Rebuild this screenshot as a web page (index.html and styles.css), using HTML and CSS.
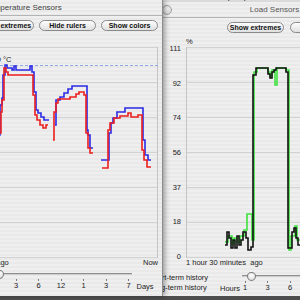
FILE: index.html
```html
<!DOCTYPE html>
<html>
<head>
<meta charset="utf-8">
<title>Sensors</title>
<link rel="stylesheet" href="styles.css">
</head>
<body>
<div class="desktop">
  <div class="bgwin"><span>sensors-report.pdf &nbsp;40% loaded</span><span>Page 3</span></div>

  <section class="win win--load">
    <header class="titlebar">
      <div class="lights"><i></i><i></i><i></i></div>
      <h1 class="title">Load Sensors</h1>
      <div class="tb-spacer"></div>
    </header>
    <div class="toolbar">
      <button class="pill">Show extremes</button>
      <button class="pill">Hide rulers</button>
      <button class="pill">Show colors</button>
    </div>
    <div class="chart">
      <div class="unit">%</div>
      <div class="axis"><span>111</span><span>92</span><span>74</span><span>56</span><span>37</span><span>18</span><span>0</span></div>
      <svg class="plot" width="222" height="211" viewBox="186 47 222 211">
        <g class="grid">
          <line x1="186" x2="408" y1="47.5" y2="47.5"/>
          <line x1="186" x2="408" y1="82.5" y2="82.5"/>
          <line x1="186" x2="408" y1="117.5" y2="117.5"/>
          <line x1="186" x2="408" y1="152.5" y2="152.5"/>
          <line x1="186" x2="408" y1="187.5" y2="187.5"/>
          <line x1="186" x2="408" y1="222.5" y2="222.5"/>
          <line x1="186" x2="408" y1="257.5" y2="257.5"/>
        </g>
        <line class="frame" x1="186.5" x2="186.5" y1="47" y2="258"/>
        <polyline class="green" points="225,242 228,242 228,236 232,236 232,244 234,244 234,238 237,238 237,242 240,242 240,236 244,236 244,230 247,230 247,214 252,214 252,240 254,240 254,72 257,72 257,68 268,68 268,72 270,72 270,76 272,76 272,70 275,70 275,85 277,85 277,68 286,68 286,70 289,70 289,250 291,250 291,236 295,236 295,226 297,226 297,240 302,240 302,232 306,232 306,244 310,244"/>
        <polyline class="black" points="225,245 227,245 227,232 229,232 229,238 231,238 231,248 233,248 233,240 235,240 235,248 237,248 237,236 239,236 239,245 241,245 241,240 243,240 243,232 246,232 246,238 248,238 248,250 251,250 251,247 253,247 253,75 256,75 256,68 268,68 268,74 270,74 270,78 272,78 272,72 274,72 274,70 276,70 276,68 286,68 286,72 288,72 288,248 292,248 292,232 294,232 294,228 296,228 296,238 298,238 298,245 302,245 302,236 306,236 306,246 310,246"/>
      </svg>
      <div class="xlabels"><span>1 hour 30 minutes&nbsp; ago</span><span>Now</span></div>
    </div>
    <div class="controls">
      <div class="radios">
        <label class="radio"><span class="dot on"></span>Short-term history</label>
        <label class="radio"><span class="dot"></span>Long-term history</label>
      </div>
      <span class="unit-lbl">Hours</span>
      <div class="slider">
        <div class="track"><span class="thumb"></span></div>
        <div class="ticks"><span>1</span><span>3</span><span>6</span><span>12</span><span>1</span><span>3</span><span>7</span></div>
      </div>
      <span class="unit-lbl unit-lbl--after">Days</span>
    </div>
  </section>

  <section class="win win--temp">
    <header class="titlebar">
      <div class="lights"><i></i><i></i><i></i></div>
      <h1 class="title">Temperature Sensors</h1>
      <div class="tb-spacer"></div>
    </header>
    <div class="toolbar">
      <button class="pill">Show extremes</button>
      <button class="pill">Hide rulers</button>
      <button class="pill">Show colors</button>
    </div>
    <div class="chart">
      <div class="unit">°C</div>
      <div class="axis"><span>70</span><span>60</span><span>50</span><span>40</span><span>30</span><span>20</span><span>10</span></div>
      <svg class="plot" width="188" height="211" viewBox="-30 47 188 211">
        <g class="grid">
          <line x1="-30" x2="158" y1="47.5" y2="47.5"/>
          <line x1="-30" x2="158" y1="82.5" y2="82.5"/>
          <line x1="-30" x2="158" y1="117.5" y2="117.5"/>
          <line x1="-30" x2="158" y1="152.5" y2="152.5"/>
          <line x1="-30" x2="158" y1="187.5" y2="187.5"/>
          <line x1="-30" x2="158" y1="222.5" y2="222.5"/>
          <line x1="-30" x2="158" y1="257.5" y2="257.5"/>
        </g>
        <line class="frame" x1="157.5" x2="157.5" y1="47" y2="258"/>
        <line class="ruler" x1="-30" x2="158" y1="65.5" y2="65.5"/>
        <text class="ruler-lbl" x="11.5" y="61.5" text-anchor="end">60 °C</text>
        <polyline class="blue" points="-30,200 -4,200 -4,135 0,135 0,105 2,105 2,98 3,98 3,75 5,75 5,65 7,65 7,68 12,68 12,70 14,70 14,66 16,66 16,70 30,70 30,66 32,66 32,72 34,72 34,92 36,92 36,110 38,110 38,113 41,113 41,117 44,117 44,120 49,120"/>
        <polyline class="blue" points="55,125 56,125 56,100 60,100 60,97 64,97 64,93 68,93 68,89 72,89 72,86 87,86 87,130 88,130 88,135 90,135 90,148 93,148"/>
        <polyline class="blue" points="101,160 109,160 109,133 111,133 111,123 113,123 113,118 117,118 117,112 125,112 125,108 143,108 143,140 145,140 145,155 148,155 148,160 151,160"/>
        <polyline class="red" points="-30,205 -3,205 -3,133 1,133 1,112 2,112 2,100 4,100 4,68 6,68 6,72 8,72 8,75 33,75 33,95 35,95 35,115 37,115 37,120 40,120 40,125 43,125 43,128 46,128 46,125 48,125"/>
        <polyline class="red" points="53,140 54,140 54,112 56,112 56,103 58,103 58,99 70,99 70,97 76,97 76,94 79,94 79,92 84,92 84,95 86,95 86,133 88,133 88,148 90,148 90,153 93,153"/>
        <polyline class="red" points="102,168 108,168 108,130 110,130 110,123 114,123 114,118 120,118 120,116 128,116 128,113 131,113 131,117 138,117 138,115 142,115 142,150 144,150 144,160 147,160 147,167 151,167"/>
      </svg>
      <div class="xlabels"><span>7 days&nbsp; ago</span><span>Now</span></div>
    </div>
    <div class="controls">
      <div class="radios">
        <label class="radio"><span class="dot on"></span>Short-term history</label>
        <label class="radio"><span class="dot"></span>Long-term history</label>
      </div>
      <span class="unit-lbl">Hours</span>
      <div class="slider">
        <div class="track"><span class="thumb"></span></div>
        <div class="ticks"><span>1</span><span>3</span><span>6</span><span>12</span><span>1</span><span>3</span><span>7</span></div>
      </div>
      <span class="unit-lbl unit-lbl--after">Days</span>
    </div>
  </section>
</div>
</body>
</html>
```

FILE: styles.css
```css
* { box-sizing: border-box; margin: 0; padding: 0; }

html, body { width: 300px; height: 300px; overflow: hidden; }

body {
  background: #4e4e4e;
  font-family: "Liberation Sans", Arial, sans-serif;
  color: #111;
}

.desktop {
  position: relative;
  width: 300px;
  height: 300px;
  overflow: hidden;
}

/* background window peeking at the very top */
.bgwin {
  position: absolute;
  left: 150px;
  top: -10px;
  width: 170px;
  height: 13px;
  background: #dadada;
  display: flex;
  justify-content: space-between;
  padding: 0 12px 0 40px;
  font-size: 8px;
  line-height: 14px;
  color: #222;
  white-space: nowrap;
}

.win {
  position: absolute;
  display: flex;
  flex-direction: column;
  background: repeating-linear-gradient(#efefef 0 2px, #e9e9e9 2px 4px);
  overflow: hidden;
}

.win--temp {
  --axis-w: 80px;
  --pad-r: 4px;
  --chart-gap: 6px;
  --ctrl-gap: 2px;
  --ctrl-pad: 0px;
  left: -115px;
  top: 0;
  width: 278px;
  height: 296px;
  z-index: 2;
  border-right: 1px solid #8c8c8c;
  box-shadow: 2px 0 5px rgba(0, 0, 0, 0.35);
}

.win--load {
  --axis-w: 63px;
  --pad-r: 23px;
  --chart-gap: 4px;
  --ctrl-gap: 4px;
  --ctrl-pad: 18.5px;
  left: 118px;
  top: 2px;
  width: 313px;
  height: 294px;
  z-index: 1;
}

/* title bar */
.titlebar {
  flex: none;
  height: 16px;
  display: flex;
  align-items: center;
  border-bottom: 1px solid #b4b4b4;
}

.lights {
  flex: none;
  width: 54px;
  display: flex;
  gap: 10px;
  padding-left: 4px;
}

.lights i {
  width: 10px;
  height: 10px;
  border-radius: 50%;
  border: 1px solid #a2a2a2;
  background: radial-gradient(circle at 50% 35%, #f6f6f6, #cfcfcf);
}

.title {
  flex: 1;
  text-align: center;
  font-size: 8px;
  font-weight: normal;
  line-height: 15px;
  color: #444;
  white-space: nowrap;
}

.win--load .title { color: #555; }

.tb-spacer { flex: none; width: 54px; }

/* toolbar */
.toolbar {
  flex: none;
  display: flex;
  justify-content: flex-end;
  gap: 5px;
  margin-top: 4px;
  padding-right: var(--pad-r);
}

.win--load .toolbar { gap: 6px; padding-right: 21px; }

.pill {
  display: block;
  flex: none;
  width: 57px;
  height: 11px;
  padding: 0;
  border: 1px solid #8a8a8a;
  border-radius: 6px;
  background: linear-gradient(#fdfdfd, #e0e0e0);
  font: bold 7px/9px "Liberation Sans", Arial, sans-serif;
  color: #111;
  text-align: center;
  white-space: nowrap;
  overflow: hidden;
}

/* chart */
.chart {
  flex: none;
  display: grid;
  grid-template-columns: var(--axis-w) 1fr;
  grid-template-rows: 10px 211px 10px;
  column-gap: 5px;
  margin-top: var(--chart-gap);
  padding-right: var(--pad-r);
  font-size: 7.5px;
  line-height: 10px;
  color: #222;
}

.unit { grid-column: 2; grid-row: 1; }

.axis {
  grid-column: 1;
  grid-row: 2;
  align-self: start;
  margin-top: -3px;
  height: 218px;
  display: flex;
  flex-direction: column;
  justify-content: space-between;
  align-items: flex-end;
}

.plot { grid-column: 2; grid-row: 2; display: block; }

.grid line { stroke: #d2d2d2; stroke-width: 1; }
.frame { stroke: #c4c4c4; stroke-width: 1; }
.ruler { stroke: #8fa8e4; stroke-width: 1; stroke-dasharray: 3 2; }
.ruler-lbl { font-size: 7.5px; fill: #222; font-family: "Liberation Sans", Arial, sans-serif; }

.plot polyline { fill: none; stroke-width: 1.6; stroke-linejoin: miter; }
.blue { stroke: #2b2be6; }
.red { stroke: #ec1f1f; }
.green { stroke: #3ee23e; }
.black { stroke: #111; }

.xlabels {
  grid-column: 2;
  grid-row: 3;
  display: flex;
  justify-content: space-between;
  white-space: nowrap;
}

/* bottom controls */
.controls {
  flex: none;
  display: flex;
  align-items: flex-start;
  margin-top: var(--ctrl-gap);
  padding-left: var(--ctrl-pad);
  font-size: 7.5px;
  color: #222;
  white-space: nowrap;
}

.radios {
  flex: none;
  width: 73px;
  display: flex;
  flex-direction: column;
  padding-top: 0.5px;
}

.radio {
  height: 10px;
  display: flex;
  align-items: center;
  gap: 3px;
}

.dot {
  flex: none;
  width: 9px;
  height: 9px;
  border-radius: 50%;
  border: 1px solid #8a8a8a;
  background: radial-gradient(circle at 50% 35%, #ffffff, #dcdcdc);
}

.dot.on {
  background: radial-gradient(circle, #333 0 1.5px, transparent 2px),
              radial-gradient(circle at 50% 35%, #ffffff, #dcdcdc);
}

.unit-lbl {
  flex: none;
  width: 18px;
  margin-top: 12px;
  margin-left: 10.5px;
  line-height: 9px;
}

.unit-lbl--after { width: auto; margin-left: 5px; }

.slider {
  flex: none;
  width: 141px;
  margin-left: 4px;
}

.track {
  position: relative;
  height: 8px;
}

.track::before {
  content: "";
  position: absolute;
  left: 0;
  right: 0;
  top: 3px;
  height: 1px;
  box-sizing: content-box;
  background: #8e8e8e;
  border-bottom: 1px solid #cfcfcf;
}

.thumb {
  position: absolute;
  left: 4.5px;
  top: -0.5px;
  width: 9px;
  height: 9px;
  border-radius: 50% 50% 50% 50% / 45% 45% 55% 55%;
  border: 1px solid #7a7a7a;
  background: radial-gradient(circle at 50% 35%, #ffffff, #d4d4d4);
}

.ticks {
  display: flex;
  justify-content: space-between;
  padding: 0 3px;
}

.ticks span {
  width: 0;
  display: flex;
  flex-direction: column;
  align-items: center;
  line-height: 9px;
}

.ticks span::before {
  content: "";
  width: 1px;
  height: 2px;
  margin-top: 1px;
  background: #7a7a7a;
}
```
